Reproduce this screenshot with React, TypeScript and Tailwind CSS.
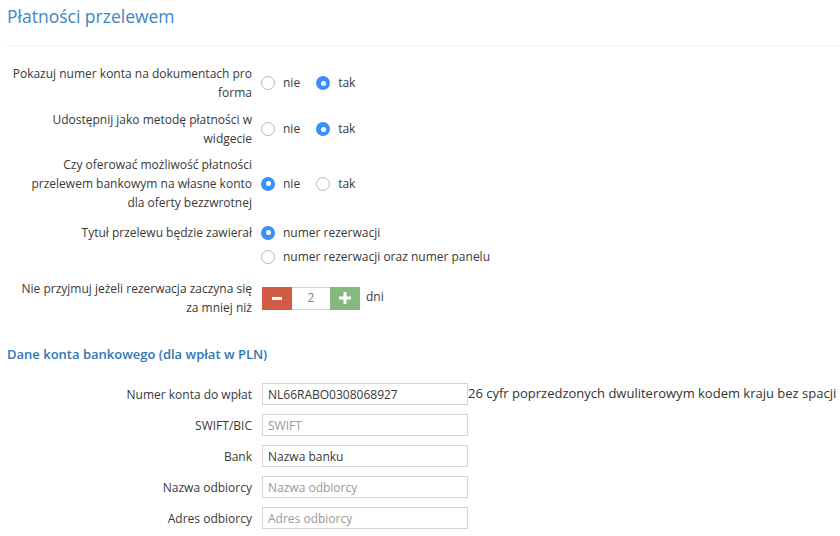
import React from "react";

const Radio = ({ checked, label }: { checked: boolean; label: string }) => (
  <label className="flex items-center h-[19px]">
    {checked ? (
      <span className="w-[14px] h-[14px] rounded-full bg-[#3b8ff6] flex items-center justify-center">
        <span className="w-[5px] h-[5px] rounded-full bg-white" />
      </span>
    ) : (
      <span className="w-[14px] h-[14px] rounded-full border border-[#b9b9b9] bg-white" />
    )}
    <span className="ml-[8px]">{label}</span>
  </label>
);

const Label = ({ children }: { children: React.ReactNode }) => (
  <div className="w-[240px] ml-[5px] text-right leading-[19px] shrink-0">
    {children}
  </div>
);

const YesNo = ({ value }: { value: boolean }) => (
  <div className="flex items-center ml-[9px]">
    <Radio checked={!value} label="nie" />
    <div className="ml-[16px]">
      <Radio checked={value} label="tak" />
    </div>
  </div>
);

const fields = [
  { label: "Numer konta do wpłat", value: "NL66RABO0308068927", placeholder: "" },
  { label: "SWIFT/BIC", value: "", placeholder: "SWIFT" },
  { label: "Bank", value: "Nazwa banku", placeholder: "" },
  { label: "Nazwa odbiorcy", value: "", placeholder: "Nazwa odbiorcy" },
  { label: "Adres odbiorcy", value: "", placeholder: "Adres odbiorcy" },
];

const App = () => {
  return (
    <div className="w-[840px] h-[536px] overflow-hidden bg-white text-[#393939] text-[12px] font-['Open_Sans',sans-serif]">
      <div className="pl-[7px]">
        <h1 className="pt-[4px] pb-[17px] text-[17.5px] leading-[24px] text-[#3c86c6] border-b border-dotted border-[#e2e2e2]">
          Płatności przelewem
        </h1>

        <div className="mt-[18px] flex items-center">
          <Label>Pokazuj numer konta na dokumentach pro forma</Label>
          <YesNo value={true} />
        </div>

        <div className="mt-[8px] flex items-center">
          <Label>Udostępnij jako metodę płatności w widgecie</Label>
          <YesNo value={true} />
        </div>

        <div className="mt-[7px] flex items-center">
          <Label>
            Czy oferować możliwość płatności przelewem bankowym na własne konto
            dla oferty bezzwrotnej
          </Label>
          <YesNo value={false} />
        </div>

        <div className="mt-[11px] flex items-start">
          <Label>Tytuł przelewu będzie zawierał</Label>
          <div className="ml-[9px] flex flex-col gap-[5px]">
            <Radio checked={true} label="numer rezerwacji" />
            <Radio checked={false} label="numer rezerwacji oraz numer panelu" />
          </div>
        </div>

        <div className="mt-[13px] flex items-center">
          <Label>Nie przyjmuj jeżeli rezerwacja zaczyna się za mniej niż</Label>
          <div className="ml-[10px] flex items-center">
            <button className="w-[30px] h-[23px] bg-[#d15b47] flex items-center justify-center">
              <span className="w-[10px] h-[3px] bg-white" />
            </button>
            <div className="w-[38px] h-[23px] border-y border-[#d5d5d5] flex items-center justify-center text-[#858585]">
              2
            </div>
            <button className="w-[30px] h-[23px] bg-[#87b87f] flex items-center justify-center">
              <svg width="12" height="12" viewBox="0 0 12 12">
                <rect x="4.5" y="0" width="3" height="12" fill="#fff" />
                <rect x="0" y="4.5" width="12" height="3" fill="#fff" />
              </svg>
            </button>
            <span className="ml-[6px] -mt-[2px]">dni</span>
          </div>
        </div>

        <h4 className="mt-[28px] leading-[19px] text-[13px] font-semibold text-[#3077b6]">
          Dane konta bankowego (dla wpłat w PLN)
        </h4>

        <div className="mt-[19px] flex flex-col gap-[9px]">
          {fields.map((f, i) => (
            <div key={f.label} className="flex items-center">
              <Label>{f.label}</Label>
              <input
                readOnly
                value={f.value}
                placeholder={f.placeholder}
                className="ml-[10px] w-[206px] h-[22px] px-[5px] border border-[#d5d5d5] text-[12px] text-[#393939] placeholder:text-[#999] outline-none"
              />
              {i === 0 && (
                <span className="whitespace-nowrap text-[13px] text-[#333]">
                  26 cyfr poprzedzonych dwuliterowym kodem kraju bez spacji
                </span>
              )}
            </div>
          ))}
        </div>
      </div>
    </div>
  );
};

export default App;
